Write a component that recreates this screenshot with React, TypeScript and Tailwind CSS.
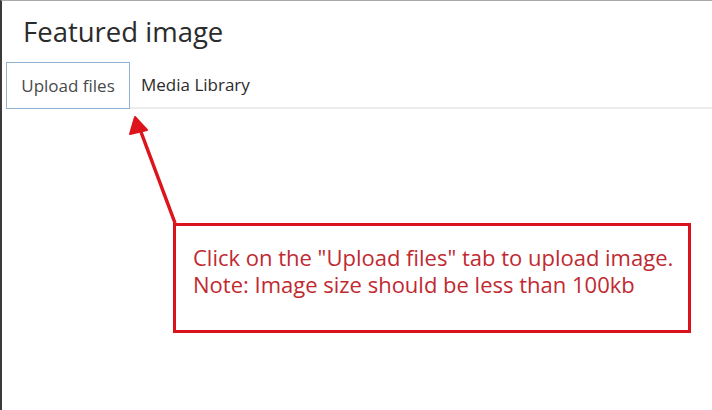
export default function App() {
  return (
    <div className="relative w-[712px] h-[410px] overflow-hidden bg-white border-l-2 border-l-[#3a3a3a] border-t border-t-[#a9a9a9] font-['Open_Sans',sans-serif]">
      <h1 className="pl-[21px] pt-[14px] text-[27.5px] leading-[33px] text-[#2b2b2b] font-normal">
        Featured image
      </h1>

      <div className="mt-[14px] flex items-stretch pl-[4px] h-[47px]">
        <div className="w-[124px] border border-[#92b2d4] flex items-center justify-center text-[17px] text-[#4a4a4a]">
          Upload files
        </div>
        <div className="flex-1 border-b-2 border-[#ececec] flex items-center pl-[11px] text-[17px] text-[#2b2b2b]">
          Media Library
        </div>
      </div>

      {/* annotation */}
      <svg className="absolute inset-0 pointer-events-none" width="712" height="410">
        <line x1="173" y1="222" x2="139" y2="131" stroke="#dc141c" strokeWidth="3.5" />
        <polygon points="133,116 128,133 145,129" fill="#dc141c" stroke="#dc141c" strokeWidth="2" strokeLinejoin="round" />
      </svg>
      <div className="absolute left-[171px] top-[222px] w-[518px] h-[110px] border-[3.5px] border-[#d9121b] pl-[17px] pt-[18px] text-[22px] leading-[27px] text-[#bf2a32]">
        <p>Click on the "Upload files" tab to upload image.</p>
        <p>Note: Image size should be less than 100kb</p>
      </div>
    </div>
  )
}
